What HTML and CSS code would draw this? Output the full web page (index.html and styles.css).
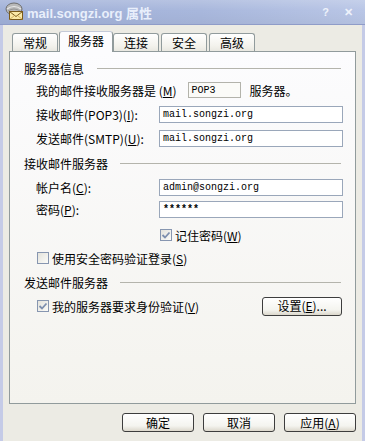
FILE: index.html
```html
<!DOCTYPE html>
<html lang="zh-CN">
<head>
<meta charset="utf-8">
<title>mail.songzi.org 属性</title>
<link rel="stylesheet" href="styles.css">
</head>
<body>
<div class="window">
  <div class="titlebar">
    <svg class="appicon" width="19" height="19" viewBox="0 0 19 19">
      <ellipse cx="9" cy="7" rx="8" ry="6" fill="#b9b9b9" stroke="#6e6e6e" stroke-width="1"/>
      <path d="M2 7 Q9 2 16 7" fill="none" stroke="#e8e8e8" stroke-width="1.2"/>
      <path d="M3 9 Q9 5 15 9" fill="none" stroke="#8a8a8a" stroke-width="0.8"/>
      <rect x="4.5" y="9.5" width="13" height="8" fill="#fbe9a6" stroke="#7a5a1a" stroke-width="1"/>
      <path d="M4.5 9.5 L11 14.5 L17.5 9.5" fill="none" stroke="#7a5a1a" stroke-width="1"/>
      <path d="M4.5 17.5 L9.5 13.5 M17.5 17.5 L12.5 13.5" fill="none" stroke="#c9a24a" stroke-width="0.8"/>
    </svg>
    <span class="title">mail.songzi.org 属性</span>
    <span class="tbtn help">?</span>
    <span class="tbtn close">✕</span>
  </div>
  <div class="client">
    <div class="tabs">
      <div class="tab">常规</div>
      <div class="tab active">服务器</div>
      <div class="tab">连接</div>
      <div class="tab">安全</div>
      <div class="tab">高级</div>
    </div>
    <div class="panel">
      <div class="group g1"><span class="gtitle">服务器信息</span><span class="rule"></span></div>
      <div class="row r1">
        <span class="inline-label">我的邮件接收服务器是 (<u>M</u>)</span>
        <div class="box readonly">POP3</div>
        <span class="after">服务器。</span>
      </div>
      <div class="row r2">
        <span class="lbl">接收邮件(POP3)(<u>I</u>):</span>
        <div class="box field">mail.songzi.org</div>
      </div>
      <div class="row r3">
        <span class="lbl">发送邮件(SMTP)(<u>U</u>):</span>
        <div class="box field">mail.songzi.org</div>
      </div>

      <div class="group g2"><span class="gtitle">接收邮件服务器</span><span class="rule"></span></div>
      <div class="row r4">
        <span class="lbl">帐户名(<u>C</u>):</span>
        <div class="box field">admin@songzi.org</div>
      </div>
      <div class="row r5">
        <span class="lbl">密码(<u>P</u>):</span>
        <div class="box field pw">******</div>
      </div>
      <div class="row cbrow cb1">
        <span class="check checked"><svg width="10" height="10" viewBox="0 0 10 10"><path d="M1.5 5 L4 7.5 L8.5 2.5" fill="none" stroke="#7d8fae" stroke-width="1.8"/></svg></span>
        <span class="cbtext">记住密码(<u>W</u>)</span>
      </div>
      <div class="row cbrow cb2">
        <span class="check"></span>
        <span class="cbtext">使用安全密码验证登录(<u>S</u>)</span>
      </div>

      <div class="group g3"><span class="gtitle">发送邮件服务器</span><span class="rule"></span></div>
      <div class="row cbrow r6">
        <span class="check checked"><svg width="10" height="10" viewBox="0 0 10 10"><path d="M1.5 5 L4 7.5 L8.5 2.5" fill="none" stroke="#7d8fae" stroke-width="1.8"/></svg></span>
        <span class="cbtext">我的服务器要求身份验证(<u>V</u>)</span>
        <span class="spacer"></span>
        <button class="btn settings">设置(<u>E</u>)...</button>
      </div>
    </div>
    <div class="buttons">
      <button class="btn">确定</button>
      <button class="btn">取消</button>
      <button class="btn">应用(<u>A</u>)</button>
    </div>
  </div>
</div>
</body>
</html>
```

FILE: styles.css
```css
html, body {
  margin: 0;
  padding: 0;
}
body {
  width: 365px;
  height: 441px;
  overflow: hidden;
  font-family: "Noto Sans CJK SC", "Noto Sans", sans-serif;
  font-size: 12px;
  color: #000;
  background: #ecebe4;
}
u { text-decoration: underline; text-underline-offset: 1px; }

.window {
  width: 365px;
  height: 441px;
  display: flex;
  flex-direction: column;
}

.titlebar {
  height: 24px;
  flex: none;
  display: flex;
  align-items: center;
  padding-left: 5px;
  border-bottom: 1px solid #8f9cc8;
  background:
    linear-gradient(to bottom, rgba(255,255,255,0.18), rgba(255,255,255,0) 45%, rgba(0,0,0,0.03)),
    linear-gradient(to right, #a0b0d8, #a8b7dc 55%, #b9c6e6);
}
.appicon { flex: none; margin-top: -1px; }
.title {
  margin-left: 3px;
  font-family: "Liberation Sans", "Noto Sans CJK SC", sans-serif;
  font-weight: bold;
  font-size: 13px;
  color: #e9effb;
  letter-spacing: 0;
}
.tbtn {
  font-family: "Liberation Sans", sans-serif;
  font-weight: bold;
  color: #eef2fb;
  font-size: 11px;
}
.help { margin-left: auto; margin-right: 15px; }
.close { margin-right: 12px; font-size: 11px; }

.client {
  flex: 1;
  border-left: 3px solid #c5cbe7;
  border-right: 3px solid #c5cbe7;
  padding: 6px 6px 0;
  display: flex;
  flex-direction: column;
}

.tabs {
  display: flex;
  align-items: flex-end;
  height: 20px;
  padding-left: 3px;
}
.tab {
  height: 18px;
  box-sizing: border-box;
  padding: 0 10px;
  border: 1px solid #919b9c;
  border-bottom: none;
  border-radius: 3px 3px 0 0;
  background: linear-gradient(#ffffff, #f3f2ec 70%, #e9e8e1);
  display: flex;
  align-items: center;
  line-height: 1;
  margin-right: 1px;
}
.tab + .tab { margin-left: 1px; }
.tab.active {
  height: 21px;
  padding: 0 8px 2px;
  margin-bottom: -1px;
  margin-left: 0;
  margin-right: 0;
  background: #fcfcfe;
  border-top: 1px solid #c4cad8;
  position: relative;
  z-index: 1;
}
.tab:nth-child(3) { margin-left: 0; }

.panel {
  height: 353px;
  box-sizing: border-box;
  border: 1px solid #919b9c;
  background: linear-gradient(#fcfcfe, #f4f3ee);
  padding-top: 8px;
  display: flex;
  flex-direction: column;
}

.group {
  height: 16px;
  display: flex;
  align-items: center;
  padding: 0 14px;
  flex: none;
}
.rule {
  flex: 1;
  height: 1px;
  background: #b4b4ac;
  margin-left: 13px;
}
.g2 .rule, .g3 .rule { margin-left: 12px; }

.row {
  display: flex;
  align-items: center;
  padding: 0 12px 0 26px;
  flex: none;
}
.lbl { width: 123px; flex: none; }
.box {
  box-sizing: border-box;
  border: 1px solid #9aa7ba;
  background: #fff;
  display: flex;
  align-items: center;
  font-family: "Liberation Mono", monospace;
  font-size: 10px;
  padding-left: 3px;
}
.field { flex: 1; height: 17px; }
.readonly {
  width: 53px;
  height: 16px;
  margin-left: 11px;
  background: #fbfbf8;
  border-color: #b3b3ab;
}
.after { margin-left: 9px; }
.pw { font-weight: bold; letter-spacing: 0; }

.r1 { height: 16px; margin-top: 6px; }
.r2 { height: 17px; margin-top: 8px; }
.r3 { height: 17px; margin-top: 7px; }
.g2 { margin-top: 8px; }
.r4 { height: 17px; margin-top: 8px; }
.r5 { height: 17px; margin-top: 5px; }
.cb1 { height: 16px; margin-top: 9px; padding-left: 150px; }
.cb2 { height: 16px; margin-top: 7px; padding-left: 27px; }
.g3 { margin-top: 8px; }
.r6 { height: 18px; margin-top: 7px; padding-left: 27px; padding-right: 13px; }

.check {
  width: 12px;
  height: 12px;
  box-sizing: border-box;
  border: 1px solid #8796b0;
  background: linear-gradient(135deg, #e4e3dc, #fbfbf8);
  display: flex;
  align-items: center;
  justify-content: center;
  flex: none;
}
.cbtext { margin-left: 3px; }
.spacer { flex: 1; }

.btn {
  font-family: "Noto Sans CJK SC", sans-serif;
  font-size: 12px;
  color: #000;
  border: 1px solid #3d3d3d;
  border-radius: 3px;
  background: linear-gradient(#ffffff, #f4f4ef 70%, #dcd8cc);
  padding: 0;
  height: 19px;
  width: 72px;
  display: flex;
  align-items: center;
  justify-content: center;
  line-height: 1;
}
.settings { width: 80px; height: 19px; }

.buttons {
  display: flex;
  justify-content: flex-end;
  gap: 9px;
  margin-top: 9px;
}
```
